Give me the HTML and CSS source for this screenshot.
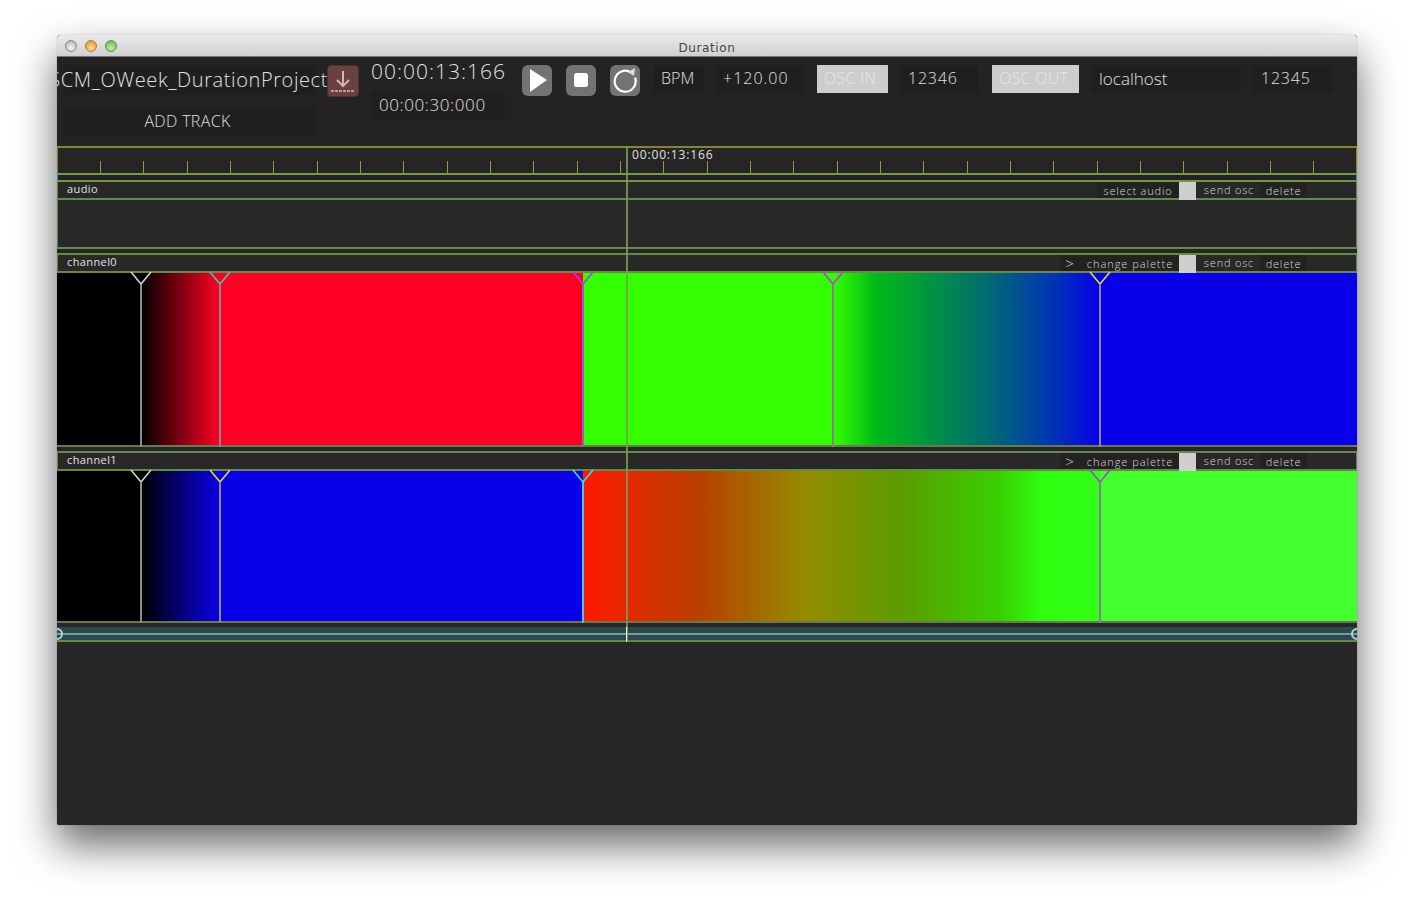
FILE: index.html
```html
<!DOCTYPE html>
<html lang="en">
  <head>
    <meta charset="UTF-8" />
    <title>Duration</title>
    <link rel="stylesheet" href="styles.css">
  </head>
  <body>
    <div class="window">
      <div class="titlebar">
        <div class="lights">
          <span class="light light-gray"></span>
          <span class="light light-orange"></span>
          <span class="light light-green"></span>
        </div>
        <span class="title">Duration</span>
      </div>

      <div class="toolbar">
        <div class="project">
          <div class="field project-name"><span>SCM_OWeek_DurationProject</span></div>
          <div class="field add-track">ADD TRACK</div>
        </div>
        <div class="save-btn">
          <svg width="32" height="32" viewBox="0 0 32 32">
            <path d="M16 6v15M10 15l6 6 6-6" fill="none" stroke="#d8b4b0" stroke-width="2" />
            <path d="M4 26h24" fill="none" stroke="#d8b4b0" stroke-width="1.5" stroke-dasharray="3 1" />
          </svg>
        </div>
        <div class="times">
          <div class="time-now">00:00:13:166</div>
          <div class="field time-total">00:00:30:000</div>
        </div>
        <div class="transport">
          <div class="icon-btn">
            <svg width="30" height="30" viewBox="0 0 30 30"><path d="M8 4l17 11-17 12z" fill="#fff" /></svg>
          </div>
          <div class="icon-btn">
            <svg width="30" height="30" viewBox="0 0 30 30"><rect x="8" y="8" width="14" height="14" rx="2.5" fill="#fff" /></svg>
          </div>
          <div class="icon-btn">
            <svg width="30" height="30" viewBox="0 0 30 30">
              <path d="M21 7.5a10.5 10.5 0 1 0 4 5" fill="none" stroke="#fff" stroke-width="2.2" />
              <path d="M18 7l7-4-1 8z" fill="#ddd" />
            </svg>
          </div>
        </div>
        <div class="field f-bpm">BPM</div>
        <div class="field f-tempo">+120.00</div>
        <div class="toggle t-in">OSC IN</div>
        <div class="field f-port">12346</div>
        <div class="toggle t-out">OSC OUT</div>
        <div class="field f-host">localhost</div>
        <div class="field f-port2">12345</div>
      </div>

      <div class="timeline">
        <div class="ruler">
          <i></i><i></i><i></i><i></i><i></i><i></i><i></i><i></i><i></i><i></i>
          <i></i><i></i><i></i><i></i><i></i><i></i><i></i><i></i><i></i><i></i>
          <i></i><i></i><i></i><i></i><i></i><i></i><i></i><i></i><i></i><i></i>
        </div>
        <div class="scrub"></div>

        <div class="track-head head-audio">
          <span class="track-name">audio</span>
          <div class="track-tools">
            <span class="tool tool-select">select audio</span>
            <span class="check"></span>
            <span class="tool tool-osc">send osc</span>
            <span class="tool tool-delete">delete</span>
          </div>
        </div>
        <div class="audio-body"></div>

        <div class="track-head head-channel">
          <span class="track-name">channel0</span>
          <div class="track-tools">
            <span class="tool tool-arrow">&gt;</span>
            <span class="tool tool-palette">change palette</span>
            <span class="check"></span>
            <span class="tool tool-osc">send osc</span>
            <span class="tool tool-delete">delete</span>
          </div>
        </div>
        <div class="channel channel0">
          <svg class="key" style="left: 84px" width="22" height="174"><use href="#k" stroke="#d0d0d0" /><rect x="10" y="11" width="2" height="163" fill="#8c8c8c" /></svg>
          <svg class="key" style="left: 163px" width="22" height="174"><use href="#k" stroke="#3fc9b4" /><rect x="10" y="11" width="2" height="163" fill="#7f8c92" /></svg>
          <svg class="key" style="left: 526px" width="22" height="174"><use href="#k" stroke="#a840e0" /><rect x="10" y="11" width="2" height="163" fill="#8468c0" /></svg>
          <svg class="key" style="left: 776px" width="22" height="174"><use href="#k" stroke="#b838e0" /><rect x="10" y="11" width="2" height="163" fill="#888090" /></svg>
          <svg class="key" style="left: 1043px" width="22" height="174"><use href="#k" stroke="#e0e020" /><rect x="10" y="11" width="2" height="163" fill="#8c86a0" /></svg>
        </div>

        <div class="track-head head-channel">
          <span class="track-name">channel1</span>
          <div class="track-tools">
            <span class="tool tool-arrow">&gt;</span>
            <span class="tool tool-palette">change palette</span>
            <span class="check"></span>
            <span class="tool tool-osc">send osc</span>
            <span class="tool tool-delete">delete</span>
          </div>
        </div>
        <div class="channel channel1">
          <svg class="key" style="left: 84px" width="22" height="152"><use href="#k" stroke="#d0d0d0" /><rect x="10" y="11" width="2" height="141" fill="#8c8c8c" /></svg>
          <svg class="key" style="left: 163px" width="22" height="152"><use href="#k" stroke="#e0e020" /><rect x="10" y="11" width="2" height="141" fill="#8c8c7c" /></svg>
          <svg class="key" style="left: 526px" width="22" height="152"><use href="#k" stroke="#40d8e8" /><rect x="10" y="11" width="2" height="141" fill="#50c8d8" /></svg>
          <svg class="key" style="left: 1043px" width="22" height="152"><use href="#k" stroke="#a048c8" /><rect x="10" y="11" width="2" height="141" fill="#8c7c98" /></svg>
        </div>

        <div class="zoom-bar">
          <span class="zoom-line"></span>
          <span class="zoom-handle zoom-left"></span>
          <span class="zoom-handle zoom-right"></span>
        </div>

        <div class="playhead"><span class="playhead-label">00:00:13:166</span></div>
      </div>
    </div>

    <svg class="defs" width="0" height="0">
      <defs>
        <path id="k" d="M1 -1L11 11L21 -1" fill="none" stroke-width="1.6" />
      </defs>
    </svg>
  </body>
</html>
```

FILE: styles.css
```css
html,
body {
  height: 100%;
}

body {
  margin: 0;
  background-color: #fff;
  font-family: "Open Sans", "Noto Sans", sans-serif;
  font-weight: 300;
  overflow: hidden;
}

.window {
  width: 1300px;
  height: 790px;
  margin: 35px 0 0 57px;
  background-color: #272727;
  border-radius: 4px 4px 2px 2px;
  box-shadow: 0 20px 42px rgba(0, 0, 0, 0.6), 0 0 1px rgba(0, 0, 0, 0.5);
  overflow: hidden;
  display: flex;
  flex-direction: column;
}

.titlebar {
  height: 22px;
  flex: none;
  box-sizing: border-box;
  border-bottom: 1px solid #777;
  background: linear-gradient(#eaeaea, #d0d0d0);
  position: relative;
  text-align: center;
}

.title {
  font-family: "DejaVu Sans", sans-serif;
  font-weight: 400;
  font-size: 12px;
  letter-spacing: 0.6px;
  line-height: 21px;
  color: #444;
}

.lights {
  position: absolute;
  top: 5px;
  left: 8px;
  display: flex;
  gap: 8px;
}

.light {
  width: 12px;
  height: 12px;
  border-radius: 50%;
  box-sizing: border-box;
  border: 1px solid #888;
}

.light-gray {
  background: radial-gradient(circle at 50% 70%, #f4f4f4, #aaa);
}

.light-orange {
  border-color: #b07a30;
  background: radial-gradient(circle at 50% 70%, #ffd9a0, #e08a20);
}

.light-green {
  border-color: #5a9a40;
  background: radial-gradient(circle at 50% 70%, #c8f0b0, #58b040);
}

.toolbar {
  height: 89px;
  flex: none;
  box-sizing: border-box;
  background-color: #232323;
  padding: 8px 0 0 8px;
  display: flex;
  align-items: flex-start;
  color: #e0e0e0;
  font-size: 16px;
}

.field {
  background-color: #1f1f1f;
  box-sizing: border-box;
  height: 28px;
  line-height: 26px;
  padding-left: 7px;
  white-space: nowrap;
}

.project {
  width: 250px;
  margin-right: 12px;
  display: flex;
  flex-direction: column;
  gap: 13px;
}

.project-name {
  height: 30px;
  font-size: 20px;
  line-height: 30px;
  display: flex;
  justify-content: flex-end;
  padding-left: 0;
}

.project-name span {
  margin-right: -13px;
  letter-spacing: 0.6px;
}

.add-track {
  padding: 0 5px 0 0;
  text-align: center;
  letter-spacing: 0.35px;
}

.save-btn {
  width: 32px;
  height: 32px;
  background-color: #6a4040;
  border: 1px solid #552c2c;
  box-sizing: border-box;
  border-radius: 4px;
  margin-right: 12px;
  position: relative;
}

.save-btn svg {
  position: absolute;
  top: -1px;
  left: -1px;
}

.times {
  width: 134px;
  margin-right: 17px;
  margin-top: -9px;
}

.time-now {
  font-size: 21px;
  line-height: 30px;
  letter-spacing: 1px;
  height: 36px;
  text-align: center;
  white-space: nowrap;
}

.time-total {
  font-size: 17px;
  line-height: 26px;
  padding-left: 8px;
  letter-spacing: 0.6px;
}

.transport {
  display: flex;
  gap: 14px;
  margin-right: 14px;
}

.icon-btn {
  width: 30px;
  height: 31px;
  background-color: #737373;
  border-radius: 6px;
}

.f-bpm {
  width: 50px;
  margin-right: 12px;
}

.f-tempo {
  width: 88px;
  margin-right: 13px;
  letter-spacing: 1px;
}

.toggle {
  height: 28px;
  background-color: #cdcdcd;
  color: #e6e6e6;
  line-height: 26px;
  padding-left: 7px;
  box-sizing: border-box;
  letter-spacing: 0.3px;
  white-space: nowrap;
}

.t-in {
  width: 71px;
  margin-right: 12px;
}

.f-port {
  width: 78px;
  margin-right: 14px;
  padding-left: 8px;
  letter-spacing: 0.8px;
}

.t-out {
  width: 87px;
  margin-right: 12px;
}

.f-host {
  width: 150px;
  margin-right: 12px;
  padding-left: 8px;
  font-size: 17px;
  line-height: 28px;
}

.f-port2 {
  width: 80px;
  padding-left: 8px;
  letter-spacing: 0.8px;
}

.timeline {
  position: relative;
  flex: none;
}

.ruler {
  height: 27px;
  box-sizing: border-box;
  border: 1px solid #85852f;
  border-top-width: 2px;
  border-bottom: none;
  display: flex;
  padding: 0 0 0 42px;
  background-color: #252525;
}

.ruler i {
  flex: none;
  width: 1px;
  height: 12px;
  margin: 13px 42.33px 0 0;
  background-color: #a8962a;
}

.scrub {
  height: 9px;
  box-sizing: border-box;
  border-top: 2px solid #7a9a46;
  border-bottom: 2px solid #6f964c;
  border-left: 1px solid #2aa0c0;
  border-right: 1px solid #2aa0c0;
  background-color: #232323;
}

.track-head {
  height: 18px;
  box-sizing: border-box;
  border: 1px solid #66884a;
  border-top: none;
  border-bottom-width: 2px;
  background-color: #282828;
  display: flex;
  justify-content: space-between;
  color: #e0e0e0;
  font-size: 11px;
}

.head-channel {
  height: 20px;
  margin-top: 4px;
  border-top: 2px solid #66884a;
}

.track-name {
  padding-left: 9px;
  line-height: 14px;
  font-weight: 400;
  letter-spacing: 0.4px;
}

.track-tools {
  display: flex;
  align-items: flex-start;
  padding-right: 49px;
  color: #d8d8d8;
  height: 16px;
}

.tool {
  background-color: #222;
  height: 16px;
  line-height: 18px;
  text-align: center;
  white-space: nowrap;
  letter-spacing: 0.8px;
}

.tool-select {
  width: 82px;
}

.tool-arrow {
  width: 21px;
  font-size: 15px;
  line-height: 16px;
  letter-spacing: 0;
  padding-right: 2px;
  box-sizing: border-box;
}

.tool-palette {
  width: 98px;
  letter-spacing: 0.95px;
}

.check {
  width: 17px;
  height: 18px;
  flex: none;
  background-color: #cfcfcf;
}

.tool-osc {
  width: 64px;
  box-sizing: border-box;
  padding-left: 2px;
  line-height: 16px;
  background-color: transparent;
}

.tool-delete {
  width: 47px;
}

.audio-body {
  height: 49px;
  box-sizing: border-box;
  border: 1px solid #66884a;
  border-top: none;
  border-bottom: 2px solid #66884a;
  background-color: #282828;
}

.channel {
  position: relative;
  box-sizing: border-box;
}

.channel0 {
  height: 174px;
  border-bottom: 2px solid #6a7a50;
  background: linear-gradient(90deg, #000 84px, #ff0024 163px, #ff0024 526px, #33ff00 526px, #33ff00 776px, #00b818 820px, #006c70 930px, #0030b8 1000px, #0a00e8 1043px, #0a00e8);
}

.channel1 {
  height: 152px;
  border-bottom: 2px solid #6a7a50;
  background: linear-gradient(90deg, #000 84px, #0a00e8 163px, #0a00e8 526px, #ff1a00 526px, #b84000 643px, #948c00 748px, #5c9c00 843px, #38d000 943px, #2eff10 985px, #33ff18 1043px, #44ff2e 1043px);
}

.key {
  position: absolute;
  top: 0;
  margin-left: -11px;
  overflow: visible;
}

.zoom-bar {
  height: 15px;
  margin-top: 4px;
  box-sizing: border-box;
  border-bottom: 2px solid #66884a;
  background-color: #2c4a4c;
  position: relative;
}

.zoom-line {
  position: absolute;
  left: 0;
  right: 0;
  top: 6px;
  height: 2px;
  background-color: #7a9aa0;
}

.zoom-handle {
  position: absolute;
  top: 1px;
  width: 12px;
  height: 12px;
  box-sizing: border-box;
  border: 2px solid #b8d0d8;
  border-radius: 50%;
}

.zoom-left {
  left: -6px;
}

.zoom-right {
  right: -6px;
}

.playhead {
  position: absolute;
  top: 0;
  left: 569px;
  width: 2px;
  height: 496px;
  background-color: rgba(125, 155, 85, 0.85);
}

.playhead::after {
  content: "";
  position: absolute;
  left: 0;
  bottom: 0;
  width: 1px;
  height: 15px;
  background-color: #e8e8e8;
}

.playhead-label {
  position: absolute;
  left: 6px;
  top: 0;
  font-size: 12px;
  font-weight: 400;
  letter-spacing: 0.85px;
  line-height: 17px;
  color: #e0e0e0;
  white-space: nowrap;
}

.defs {
  position: absolute;
}
```
